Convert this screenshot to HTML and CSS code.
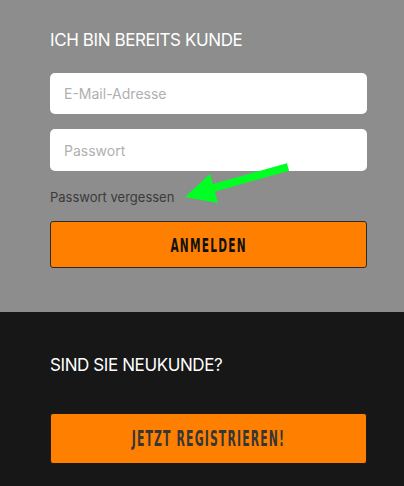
FILE: index.html
```html
<!DOCTYPE html>
<html lang="de">
<head>
<meta charset="utf-8">
<link rel="stylesheet" href="styles.css">
</head>
<body>
<section class="login">
  <h2 class="title">ICH BIN BEREITS KUNDE</h2>
  <input class="field field-first" type="email" placeholder="E-Mail-Adresse">
  <input class="field field-second" type="password" placeholder="Passwort">
  <a class="forgot" href="#">Passwort vergessen</a>
  <button class="btn btn-login" type="button"><span class="btn-label">ANMELDEN</span></button>
  <svg class="arrow" width="404" height="312" viewBox="0 0 404 312">
    <line x1="288" y1="167" x2="206" y2="190" stroke="#00ff22" stroke-width="8"/>
    <polygon points="185,197 210,174 218,203" fill="#00ff22"/>
  </svg>
</section>
<section class="register">
  <h2 class="title">SIND SIE NEUKUNDE?</h2>
  <button class="btn btn-register" type="button"><span class="btn-label btn-label-narrow">JETZT REGISTRIEREN!</span></button>
</section>
</body>
</html>
```
FILE: styles.css
```css
html, body {
  margin: 0;
  padding: 0;
  background: #171717;
}
body {
  width: 404px;
  height: 486px;
  overflow: hidden;
  font-family: Inter, "Noto Sans", sans-serif;
}
.login {
  position: relative;
  background: #8d8d8d;
  height: 312px;
  box-sizing: border-box;
  padding: 30px 37px 0 50px;
  display: flex;
  flex-direction: column;
}
.title {
  margin: 0;
  font-size: 17px;
  line-height: 20px;
  font-weight: 400;
  letter-spacing: -0.4px;
  color: #fff;
}
.field {
  display: block;
  box-sizing: border-box;
  width: 317px;
  height: 41px;
  border: 0;
  border-radius: 5px;
  background: #fff;
  padding: 0 14px;
  font-family: Inter, "Noto Sans", sans-serif;
  font-size: 14px;
  color: #333;
  outline: none;
}
.field::placeholder {
  color: #b0b0b0;
}
.field-first {
  margin-top: 23px;
}
.field-second {
  margin-top: 15px;
  height: 42px;
}
.forgot {
  margin-top: 18px;
  font-size: 13px;
  line-height: 16px;
  color: #3a3a3a;
  text-decoration: none;
  align-self: flex-start;
}
.btn {
  display: flex;
  align-items: center;
  justify-content: center;
  box-sizing: border-box;
  width: 317px;
  border: 1px solid #2a2a2a;
  border-radius: 3px;
  background: #ff8000;
  font-family: "DejaVu Sans Condensed", "DejaVu Sans", sans-serif;
  font-weight: 700;
  padding: 0;
  cursor: pointer;
}
.btn-label {
  display: inline-block;
  transform: scaleX(0.62);
  white-space: nowrap;
}
.btn-label-narrow {
  transform: scaleX(0.575);
}
.btn-login {
  margin-top: 16px;
  height: 47px;
  font-size: 19px;
  letter-spacing: 2px;
  color: #111;
}
.arrow {
  position: absolute;
  left: 0;
  top: 0;
  pointer-events: none;
}
.register {
  padding: 43px 37px 0 50px;
}
.btn-register {
  margin-top: 38px;
  height: 51px;
  font-size: 21px;
  letter-spacing: 2px;
  color: #363636;
  border-color: #1a1a1a;
}
```
